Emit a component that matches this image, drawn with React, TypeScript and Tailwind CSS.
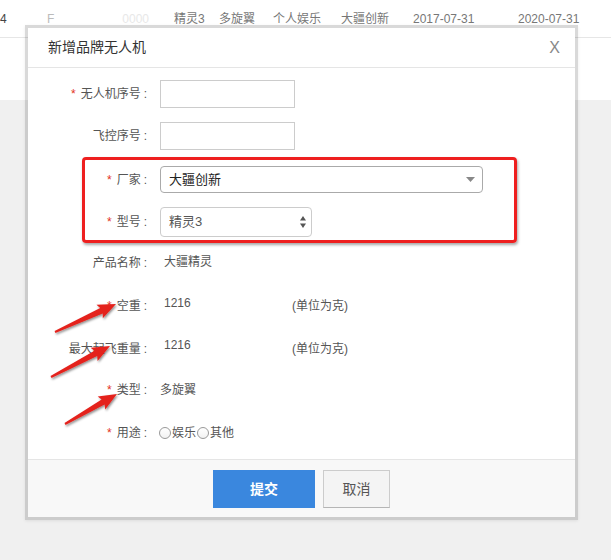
import React from "react";

const FONT = '"Liberation Sans", "Noto Sans CJK SC", sans-serif';

function arrowPoints(tx: number, ty: number, px: number, py: number) {
  const dx = px - tx;
  const dy = py - ty;
  const L = Math.hypot(dx, dy);
  const ux = dx / L;
  const uy = dy / L;
  const nx = -uy;
  const ny = ux;
  const headLen = 16;
  const bx = px - ux * headLen;
  const by = py - uy * headLen;
  const wx = px - ux * (headLen + 2);
  const wy = py - uy * (headLen + 2);
  const pts: [number, number][] = [
    [tx + nx * 1, ty + ny * 1],
    [bx + nx * 3, by + ny * 3],
    [wx + nx * 7.5, wy + ny * 7.5],
    [px, py],
    [wx - nx * 7.5, wy - ny * 7.5],
    [bx - nx * 3, by - ny * 3],
    [tx - nx * 1, ty - ny * 1],
  ];
  return pts.map((p) => `${p[0].toFixed(1)},${p[1].toFixed(1)}`).join(" ");
}

function Label({ text, req }: { text: string; req?: boolean }) {
  return (
    <div className="w-[120px] shrink-0 text-right text-[12px] text-[#555] pr-[1px] whitespace-nowrap">
      {req && <span className="text-[#e3321c] mr-[5px]">*</span>}
      <span>{text}</span>
      <span className="ml-[3px]">:</span>
    </div>
  );
}

export default function App() {
  return (
    <div
      className="relative w-[611px] h-[560px] overflow-hidden bg-[#f0f0f0]"
      style={{ fontFamily: FONT }}
    >
      {/* background table */}
      <div className="h-[100px] bg-white">
        <div className="h-[38px] border-b border-[#e6e6e6] flex items-center text-[12px] text-[#777] whitespace-nowrap">
          <div className="w-[47px] text-[#444]">4</div>
          <div className="w-[127px] text-[#bbb]">
            F<span className="ml-[68px] text-[#e8e8e8]">0000</span>
          </div>
          <div className="w-[45px]">精灵3</div>
          <div className="w-[54px]">多旋翼</div>
          <div className="w-[68px]">个人娱乐</div>
          <div className="w-[72px]">大疆创新</div>
          <div className="w-[105px]">2017-07-31</div>
          <div>2020-07-31</div>
        </div>
      </div>

      {/* modal */}
      <div className="absolute left-[25px] top-[25px] w-[553px] h-[495px] border-[3px] border-black/15 shadow-[0_1px_3px_rgba(0,0,0,0.08)]">
        <div className="w-full h-full bg-white flex flex-col">
          {/* header */}
          <div className="h-[40px] shrink-0 border-b border-[#e5e5e5] flex items-center justify-between pl-[20px] pr-[15px]">
            <div className="text-[14px] text-[#333]">新增品牌无人机</div>
            <div className="text-[16px] text-[#888] leading-none">X</div>
          </div>

          {/* body */}
          <div className="flex-1 flex flex-col pt-[12px]">
            <div className="flex items-center h-[28px]">
              <Label text="无人机序号" req />
              <div className="ml-[12px] w-[135px] h-[28px] border border-[#ccc] bg-white" />
            </div>
            <div className="flex items-center h-[28px] mt-[14px]">
              <Label text="飞控序号" />
              <div className="ml-[12px] w-[135px] h-[28px] border border-[#ccc] bg-white" />
            </div>
            <div className="flex items-center h-[27px] mt-[16px]">
              <Label text="厂家" req />
              <div className="ml-[12px] w-[323px] h-[27px] border border-[#aaa] rounded-[4px] bg-white flex items-center justify-between pl-[8px] pr-[7px]">
                <span className="text-[13px] text-[#222]">大疆创新</span>
                <svg width="9" height="5" viewBox="0 0 9 5">
                  <polygon points="0,0 9,0 4.5,5" fill="#888" />
                </svg>
              </div>
            </div>
            <div className="flex items-center h-[30px] mt-[14px]">
              <Label text="型号" req />
              <div className="ml-[12px] w-[152px] h-[30px] border border-[#ccc] rounded-[4px] bg-white flex items-center justify-between pl-[8px] pr-[5px]">
                <span className="text-[13px] text-[#555]">精灵3</span>
                <svg width="6" height="12" viewBox="0 0 6 12">
                  <polygon points="0,4.5 6,4.5 3,0" fill="#555" />
                  <polygon points="0,7.5 6,7.5 3,12" fill="#555" />
                </svg>
              </div>
            </div>
            <div className="flex items-center h-[24px] mt-[14px]">
              <Label text="产品名称" />
              <span className="ml-[16px] -mt-[2px] text-[12px] text-[#555]">大疆精灵</span>
            </div>
            <div className="flex items-center h-[24px] mt-[19px]">
              <Label text="空重" req />
              <span className="ml-[16px] -mt-[6px] w-[128px] text-[12px] text-[#555]">1216</span>
              <span className="text-[12px] text-[#555]">(单位为克)</span>
            </div>
            <div className="flex items-center h-[24px] mt-[19px]">
              <Label text="最大起飞重量" />
              <span className="ml-[16px] -mt-[8px] w-[128px] text-[12px] text-[#555]">1216</span>
              <span className="text-[12px] text-[#555]">(单位为克)</span>
            </div>
            <div className="flex items-center h-[24px] mt-[17px]">
              <Label text="类型" req />
              <span className="ml-[12px] text-[12px] text-[#555]">多旋翼</span>
            </div>
            <div className="flex items-center h-[24px] mt-[19px]">
              <Label text="用途" req />
              <div className="ml-[11px] flex items-center text-[12px] text-[#555]">
                <span className="w-[12px] h-[12px] rounded-full border border-[#999] bg-gradient-to-b from-white to-[#f2f2f2]" />
                <span className="ml-[1px]">娱乐</span>
                <span className="ml-[1px] w-[12px] h-[12px] rounded-full border border-[#999] bg-gradient-to-b from-white to-[#f2f2f2]" />
                <span className="ml-[1px]">其他</span>
              </div>
            </div>
          </div>

          {/* footer */}
          <div className="h-[58px] shrink-0 border-t border-[#e5e5e5] bg-[#f8f8f8] flex justify-center items-start pt-[10px] gap-[8px]">
            <button className="w-[102px] h-[38px] bg-[#3a87de] text-white text-[14px] font-bold">
              提交
            </button>
            <button className="w-[67px] h-[38px] bg-[#f4f4f4] border border-[#ccc] border-b-[#b5b5b5] text-[#555] text-[14px]">
              取消
            </button>
          </div>
        </div>
      </div>

      {/* annotation: red box */}
      <div className="absolute left-[82px] top-[157px] w-[435px] h-[86px] border-[3px] border-[#ee1f1f] rounded-[4px] shadow-[1px_2px_3px_rgba(0,0,0,0.35)] pointer-events-none" />

      {/* annotation: arrows */}
      <svg className="absolute left-0 top-0 pointer-events-none" width="611" height="560">
        <defs>
          <filter id="sh" x="-20%" y="-20%" width="140%" height="140%">
            <feDropShadow dx="1" dy="1.5" stdDeviation="1" floodColor="#000" floodOpacity="0.45" />
          </filter>
        </defs>
        <polygon points={arrowPoints(55, 332, 116, 304)} fill="#e4221c" filter="url(#sh)" />
        <polygon points={arrowPoints(51, 377, 110, 346)} fill="#e4221c" filter="url(#sh)" />
        <polygon points={arrowPoints(65, 424, 117, 394)} fill="#e4221c" filter="url(#sh)" />
      </svg>
    </div>
  );
}
